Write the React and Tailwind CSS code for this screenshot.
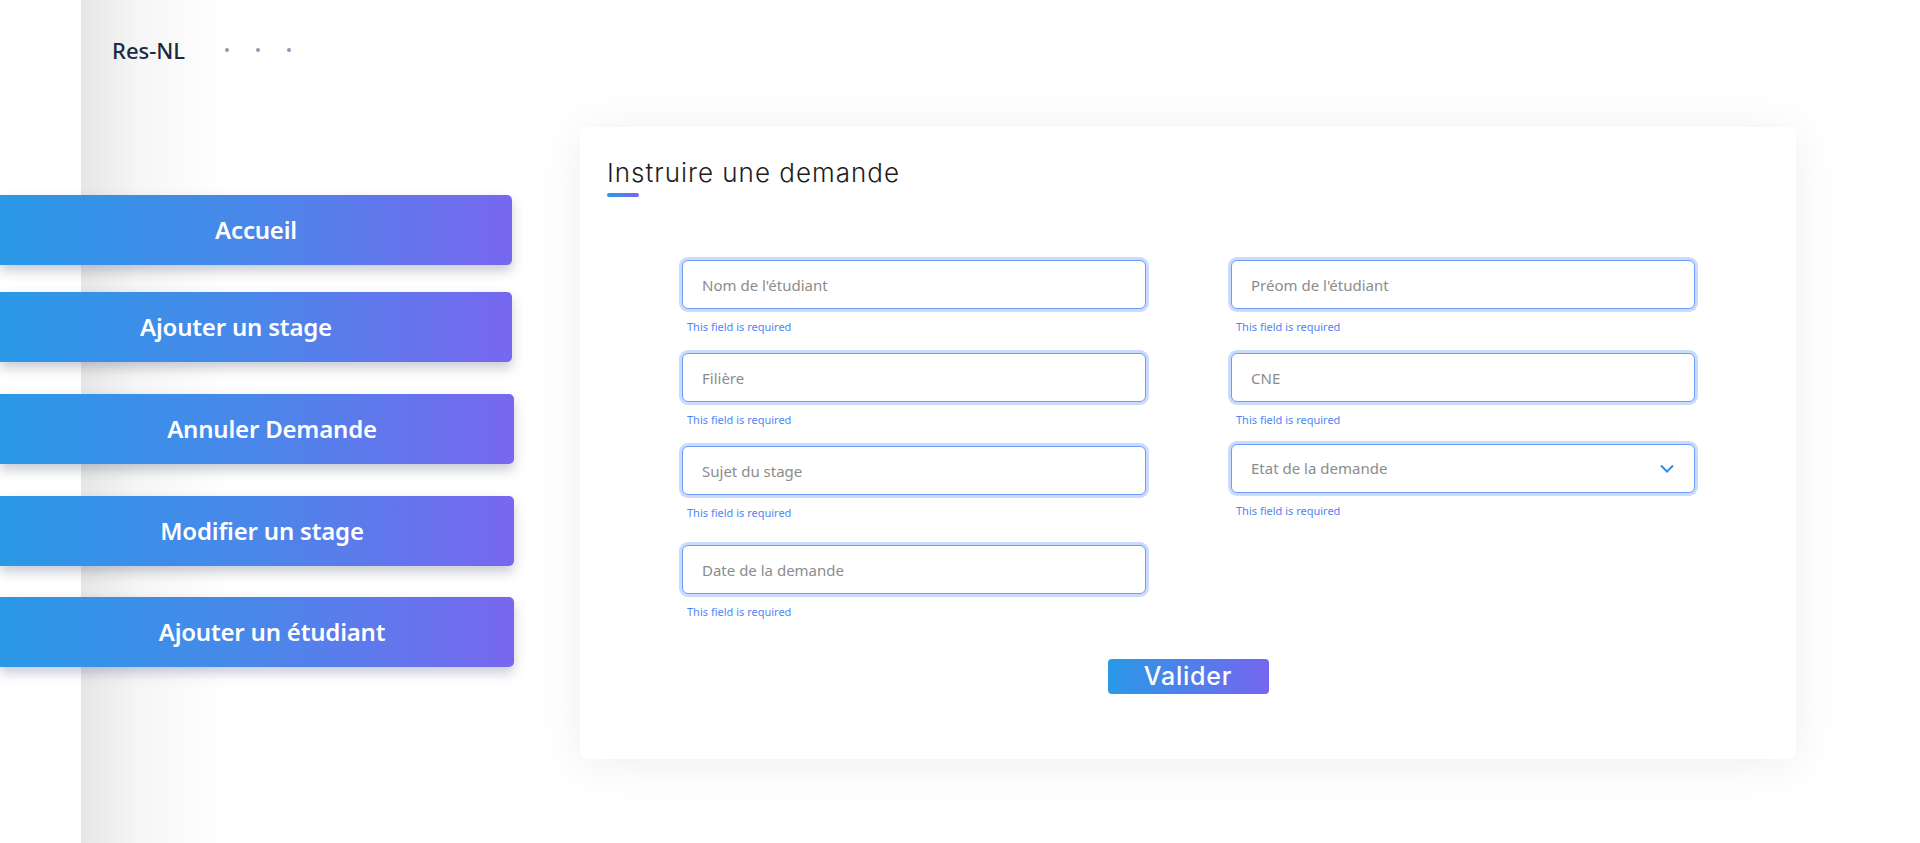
import React from "react";

const navItems = [
  { label: "Accueil", mt: "mt-0", w: "w-[512px]", pl: "pl-0" },
  { label: "Ajouter un stage", mt: "mt-[27px]", w: "w-[512px]", pl: "pl-0", pr: "pr-[40px]" },
  { label: "Annuler Demande", mt: "mt-[32px]", w: "w-[514px]", pl: "pl-[30px]" },
  { label: "Modifier un stage", mt: "mt-[32px]", w: "w-[514px]", pl: "pl-[10px]" },
  { label: "Ajouter un étudiant", mt: "mt-[31px]", w: "w-[514px]", pl: "pl-[30px]" },
];

function Field({ placeholder, className = "" }) {
  return (
    <div className={`flex flex-col ${className}`}>
      <input
        placeholder={placeholder}
        className="h-[49px] w-full rounded-[6px] border border-[#6c9cf7] bg-white px-[19px] text-[15px] text-[#333] outline-none ring-[3px] ring-[#cadbfd] placeholder:text-[#8c8c8c]"
        style={{ fontFamily: '"Noto Sans", sans-serif' }}
      />
      <span className="mt-[11px] pl-[5px] text-[11px] leading-[14px] text-[#4f86f7]">This field is required</span>
    </div>
  );
}

function SelectField({ placeholder }) {
  return (
    <div className="-mt-[2px] flex flex-col">
      <div className="flex h-[49px] w-full items-center justify-between rounded-[6px] border border-[#6c9cf7] bg-white pl-[19px] pr-[20px] ring-[3px] ring-[#cadbfd]">
        <span className="text-[15px] text-[#8c8c8c]">{placeholder}</span>
        <svg width="14" height="9" viewBox="0 0 14 9" fill="none">
          <path d="M1 1.5 7 7.5 13 1.5" stroke="#2d8ce6" strokeWidth="2" />
        </svg>
      </div>
      <span className="mt-[11px] pl-[5px] text-[11px] leading-[14px] text-[#4f86f7]">This field is required</span>
    </div>
  );
}

export default function App() {
  return (
    <div className="flex min-h-[843px] w-[1920px] bg-white font-['Noto_Sans',sans-serif]">
      <aside className="flex w-[580px] shrink-0 flex-col bg-[linear-gradient(to_right,#fff_81px,#e6e6e6_81px,#f6f6f6_140px,#fff_230px)]">
        <div className="flex h-[100px] items-center pl-[112px]">
          <span className="text-[22px] font-medium leading-none text-[#1a2b42]">Res-NL</span>
          <div className="ml-[40px] flex gap-[27px]">
            <span className="h-[4px] w-[4px] rounded-full bg-[#8f98b3]" />
            <span className="h-[4px] w-[4px] rounded-full bg-[#8f98b3]" />
            <span className="h-[4px] w-[4px] rounded-full bg-[#8f98b3]" />
          </div>
        </div>
        <nav className="mt-[95px] flex flex-col">
          {navItems.map((item) => (
            <a
              key={item.label}
              href="#"
              className={`${item.mt} ${item.w} ${item.pl} ${item.pr || ""} flex h-[70px] items-center justify-center rounded-r-[5px] bg-[linear-gradient(to_right,#2a99e7,#4a87ea_50%,#7867ef)] text-[24px] font-semibold tracking-[-0.2px] text-white shadow-[0_6px_12px_rgba(40,50,90,0.25)]`}
            >
              {item.label}
            </a>
          ))}
        </nav>
      </aside>

      <main className="flex-1 pt-[127px]">
        <section className="flex h-[632px] w-[1216px] flex-col rounded-[6px] bg-white shadow-[0_4px_50px_rgba(0,0,0,0.07)]">
          <div className="pl-[27px] pt-[31px]">
            <h1 className="font-['Inter',sans-serif] text-[26px] font-light leading-[30px] tracking-[1px] text-[#1d1d1d]">
              Instruire une demande
            </h1>
            <div className="mt-[5px] h-[4px] w-[32px] rounded-full bg-[linear-gradient(to_right,#2a99e7,#7867ef)]" />
          </div>

          <div className="mt-[63px] grid grid-cols-[464px_464px] gap-x-[85px] gap-y-[19px] px-[102px]">
            <Field placeholder="Nom de l'étudiant" />
            <Field placeholder="Préom de l'étudiant" />
            <Field placeholder="Filière" />
            <Field placeholder="CNE" />
            <Field placeholder="Sujet du stage" />
            <SelectField placeholder="Etat de la demande" />
            <Field placeholder="Date de la demande" className="mt-[6px]" />
          </div>

          <div className="mt-[40px] flex justify-center">
            <button className="flex h-[35px] w-[161px] items-center justify-center rounded-[4px] bg-[linear-gradient(to_right,#2a99e7,#7566ef)] font-['Inter',sans-serif] text-[25px] font-medium tracking-[0.8px] text-white">
              Valider
            </button>
          </div>
        </section>
      </main>
    </div>
  );
}
